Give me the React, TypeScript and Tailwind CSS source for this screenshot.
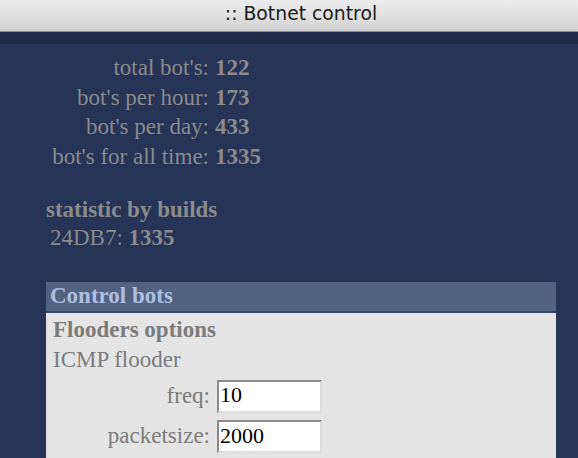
import React from "react";

const stats = [
  { label: "total bot's:", value: "122" },
  { label: "bot's per hour:", value: "173" },
  { label: "bot's per day:", value: "433" },
  { label: "bot's for all time:", value: "1335" },
];

const fields = [
  { label: "freq:", value: "10" },
  { label: "packetsize:", value: "2000" },
];

const App: React.FC = () => {
  return (
    <div className="h-[458px] w-[578px] overflow-hidden bg-[#253457] font-['Liberation_Serif',serif] text-[23px] text-[#8b8b8b]">
      {/* window title */}
      <div className="flex h-[32px] items-center justify-center border-b border-[#8f8f8f] bg-gradient-to-b from-[#eeeeee] to-[#d2d2d2] pb-[2px] pl-[24px] font-['DejaVu_Sans',sans-serif] text-[18.8px] text-[#1a1a1a]">
        :: Botnet control
      </div>
      <div className="h-[12px] bg-[#1f2a48]"></div>

      {/* counters */}
      <div className="grid grid-cols-[209px_auto] pt-[9px] leading-[29.7px]">
        {stats.map((s) => (
          <React.Fragment key={s.label}>
            <div className="text-right">{s.label}</div>
            <div className="pl-[6px] font-bold">{s.value}</div>
          </React.Fragment>
        ))}
      </div>

      {/* builds */}
      <div className="mt-[23px] pl-[46px] font-bold leading-[30px]">
        statistic by builds
      </div>
      <div className="pl-[50px] leading-[25px]">
        24DB7: <span className="font-bold">1335</span>
      </div>

      {/* control panel */}
      <div className="ml-[46px] mt-[32px] w-[510px]">
        <div className="h-[29px] bg-[#526283] pl-[4px] font-bold leading-[28px] text-[#adbfe2]">
          Control bots
        </div>
        <div className="h-[2px] bg-[#38446a]"></div>
        <div className="h-[200px] bg-[#e4e4e4] pl-[7px] pt-[2px] text-[#7b7b7b]">
          <div className="font-bold leading-[30px]">Flooders options</div>
          <div className="leading-[30px]">ICMP flooder</div>
          <div className="mt-[4px] flex flex-col gap-[6px]">
            {fields.map((f) => (
              <div key={f.label} className="flex items-center">
                <div className="w-[157px] text-right">{f.label}</div>
                <input
                  type="text"
                  defaultValue={f.value}
                  className="ml-[7px] h-[33px] w-[105px] border-2 border-b-[#dcdcdc] border-l-[#8a8a8a] border-r-[#dcdcdc] border-t-[#8a8a8a] bg-white px-[1px] pb-[3px] font-['Liberation_Serif',serif] text-[22px] text-black outline-none"
                />
              </div>
            ))}
          </div>
          <div className="mt-[2px] leading-[30px]">SYN flooder</div>
        </div>
      </div>
    </div>
  );
};

export default App;
